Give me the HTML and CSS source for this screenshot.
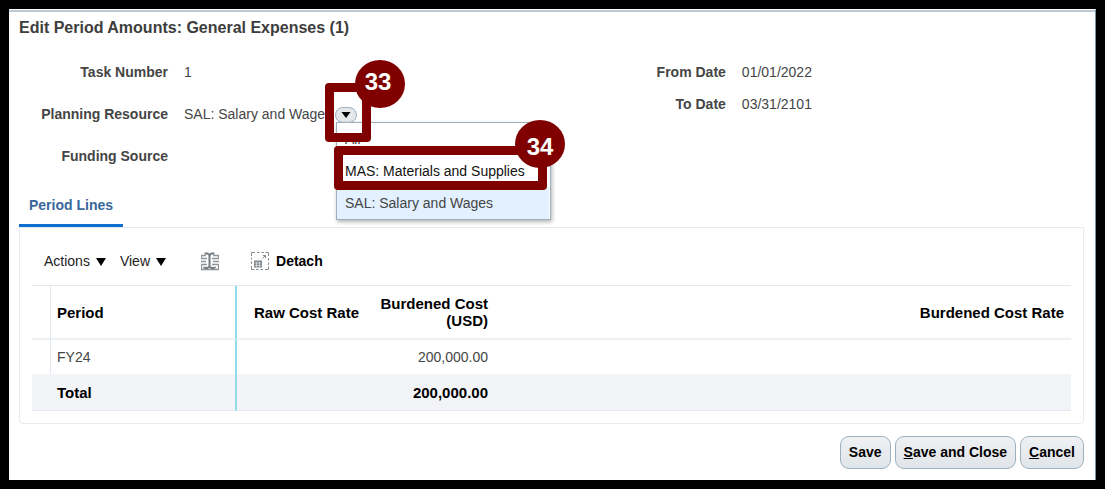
FILE: index.html
```html
<!DOCTYPE html>
<html lang="en">
<head>
  <meta charset="UTF-8" />
  <meta name="viewport" content="width=device-width, initial-scale=1.0"/>
  <title>Edit Period Amounts</title>
  <link rel="stylesheet" href="styles.css">
</head>
<body>
  <main class="dialog">
    <h1>Edit Period Amounts: General Expenses (1)</h1>

    <div class="details">
      <div class="fields">
        <span class="label">Task Number</span>
        <span>1</span>
        <label class="label" for="resource">Planning Resource</label>
        <div class="picker">
          <select id="resource">
            <option>All</option>
            <option>MAS: Materials and Supplies</option>
            <option selected>SAL: Salary and Wages</option>
          </select>
          <svg class="picker-arrow" width="22" height="16" viewBox="0 0 22 16">
            <rect x="0.5" y="0.5" width="21" height="15" rx="7.5" fill="#e4e8eb" stroke="#9db0be"/>
            <path d="M6.500 5h9l-4.500 6z" fill="#000"/>
          </svg>
          <ul class="options">
            <li>All</li>
            <li class="hovered">MAS: Materials and Supplies<span class="mark mark-option"></span><span class="step step-option">34</span></li>
            <li class="selected">SAL: Salary and Wages</li>
          </ul>
          <span class="mark mark-arrow"></span>
          <span class="step step-arrow">33</span>
        </div>
        <span class="label">Funding Source</span>
        <span></span>
      </div>
      <div class="fields dates">
        <span class="label">From Date</span>
        <span>01/01/2022</span>
        <span class="label">To Date</span>
        <span>03/31/2101</span>
      </div>
    </div>

    <nav class="tabs">
      <a class="tab" href="#lines">Period Lines</a>
    </nav>

    <section class="panel" id="lines">
      <div class="toolbar">
        <button class="menu">Actions <svg width="10" height="10" viewBox="0 0 10 10"><path d="M0 2h10L5 10z"/></svg></button>
        <button class="menu">View <svg width="10" height="10" viewBox="0 0 10 10"><path d="M0 2h10L5 10z"/></svg></button>
        <button class="freeze" aria-label="Freeze">
          <svg width="18" height="19" viewBox="0 0 18 19" fill="none" stroke="#90959a">
            <path d="M5 3.500H.5v3H6M5 9.500H0M6 12.500H.5v5H5M2 15.500h3M12 3.500h5.500v3H11M12 9.500h6M11 12.500h6.500v5H12M12 15.500h3M5 17.500h8" stroke-width="1.300"/>
            <path d="M3.500 1.500h3l2 1.500 2-1.500h3M8.500 3v12M3.500 16h3l2-1.500 2 1.500h3" stroke="#747a80" stroke-width="2"/>
          </svg>
        </button>
        <button class="detach">
          <svg width="18" height="18" viewBox="0 0 18 18" fill="none" stroke="#858b90">
            <path d="M.5 4V.5H4M6 .5h2.500M10.500 .5H13M14.500 .5h3V4M17.500 6v2.500M17.500 10.500V13M17.500 14.500v3H14M12 17.500H9.500M7.500 17.500H5M3.500 17.500h-3V14M.5 12V9.500M.5 7.500V5.500"/>
            <path d="M3 8.500h8v7H3z" fill="#858b90" stroke="none"/>
            <path d="M4 11h6M4 13.500h6M5.500 10v5M8.500 10v5" stroke="#e4e6e8" stroke-width="0.700"/>
            <path d="M11.500 6.500l3-3M12 3.500h2.500V6"/>
          </svg>
          Detach
        </button>
      </div>

      <table>
        <colgroup>
          <col class="col-gutter">
          <col class="col-period">
          <col class="col-cost">
          <col class="col-cost">
          <col>
        </colgroup>
        <thead>
          <tr>
            <td class="gutter"></td>
            <th class="period">Period</th>
            <th>Raw Cost Rate</th>
            <th>Burdened Cost (USD)</th>
            <th>Burdened Cost Rate</th>
          </tr>
        </thead>
        <tbody>
          <tr>
            <td class="gutter"></td>
            <td class="period">FY24</td>
            <td></td>
            <td>200,000.00</td>
            <td></td>
          </tr>
        </tbody>
        <tfoot>
          <tr>
            <td></td>
            <th class="period">Total</th>
            <td></td>
            <td>200,000.00</td>
            <td></td>
          </tr>
        </tfoot>
      </table>
    </section>

    <div class="actions">
      <button>Save</button>
      <button><u>S</u>ave and Close</button>
      <button><u>C</u>ancel</button>
    </div>
  </main>
</body>
</html>
```
FILE: styles.css
```css
* {
  box-sizing: border-box;
  padding: 0;
  margin: 0;
  font-family: "Liberation Sans", Arial, sans-serif;
}

body {
  background: #000;
  padding: 9px;
  font-size: 14px;
  color: #454545;
}

.dialog {
  background: #fff;
  border-top: 1px solid #fff;
  border-right: 1px solid #7d929f;
  box-shadow: inset 0 2px #bccad5;
  padding: 8px 11px 11px 10px;
}

h1 {
  font-size: 16px;
  line-height: 20px;
  color: #3d3d3d;
}

.details {
  display: grid;
  grid-template-columns: 11fr 10fr;
  padding-top: 13px;
}

.fields {
  display: grid;
  grid-template-columns: 149px 1fr;
  grid-auto-rows: 42px;
  column-gap: 16px;
  align-items: center;
}

.dates {
  grid-auto-rows: 32px;
  padding-top: 5px;
}

.label {
  font-weight: bold;
  text-align: right;
}

.picker {
  position: relative;
  width: 173px;
}

.picker select {
  display: block;
  width: 100%;
  height: 20px;
  border: none;
  background: none;
  appearance: none;
  font-size: 14px;
  color: #454545;
}

.picker-arrow {
  position: absolute;
  top: 3px;
  right: 0;
}

.options {
  position: absolute;
  top: 18px;
  left: 152px;
  width: 215px;
  z-index: 1;
  padding-right: 1px;
  background: #fff;
  border: 1px solid #9db0be;
  box-shadow: 1px 2px 4px rgba(0, 0, 0, 0.3);
  list-style: none;
}

.options li {
  position: relative;
  padding-left: 8px;
  line-height: 32px;
}

.options .hovered {
  color: #111;
  z-index: 1;
}

.options .selected {
  background: #e2f0ff;
}

/* numbered step callouts */
.mark {
  position: absolute;
  z-index: 2;
  border: 9px solid #800000;
  border-radius: 4px;
}

.mark-arrow {
  top: -21px;
  left: 141px;
  width: 46px;
  height: 59px;
}

.mark-option {
  top: -9px;
  left: -3px;
  width: 213px;
  height: 44px;
}

.step {
  position: absolute;
  z-index: 3;
  width: 50px;
  height: 48px;
  padding-right: 4px;
  border-radius: 50%;
  background: #800000;
  color: #fff;
  font-size: 24px;
  font-weight: bold;
  line-height: 44px;
  text-align: center;
}

.step-arrow {
  top: -44px;
  left: 171px;
}

.step-option {
  top: -35px;
  left: 178px;
  padding: 0;
  line-height: 54px;
}

.tabs {
  display: flex;
}

.tab {
  padding: 20px 10px 11px;
  border-bottom: 3px solid #0f6fd0;
  color: #38679c;
  font-weight: bold;
  line-height: 16px;
  text-decoration: none;
}

.panel {
  border: 1px solid #e4ebf1;
  border-radius: 0 0 4px 4px;
  padding: 15px 12px 12px;
}

.toolbar {
  display: flex;
  align-items: center;
  height: 36px;
  margin-bottom: 6px;
  padding-left: 12px;
}

.toolbar button {
  display: flex;
  align-items: center;
  border: none;
  background: none;
  color: #222;
  font-size: 14px;
}

.toolbar .menu {
  gap: 6px;
  margin-right: 14px;
}

.toolbar .freeze {
  margin: 0 32px 0 21px;
}

.toolbar .detach {
  gap: 7px;
  color: #000;
  font-weight: bold;
}

table {
  width: 100%;
  table-layout: fixed;
  border-spacing: 0;
  border-top: 1px solid #e1e8ef;
}

.col-gutter {
  width: 19px;
}

.col-period {
  width: 186px;
}

.col-cost {
  width: 129px;
}

th,
td {
  height: 34px;
  padding: 0 7px 0 6px;
  text-align: right;
}

thead th,
thead td {
  height: 54px;
  border-bottom: 2px solid #edf1f5;
}

th {
  color: #000;
  font-size: 15px;
  line-height: 17px;
}

.gutter {
  border-right: 1px solid #e1e8ef;
}

.period {
  text-align: left;
  border-right: 2px solid #8fdce8;
}

tfoot th,
tfoot td {
  height: 37px;
  background: #f2f4f8;
  border-bottom: 1px solid #e4e9ee;
  color: #000;
  font-size: 15px;
  font-weight: bold;
}

.actions {
  display: flex;
  justify-content: flex-end;
  gap: 4px;
  padding-top: 12px;
}

.actions button {
  height: 33px;
  padding: 0 8px 2px;
  border: 1px solid #9db0be;
  border-radius: 9px;
  background: linear-gradient(#eff1f3, #e0e5e9);
  color: #000;
  font-size: 14px;
  font-weight: bold;
}
```
